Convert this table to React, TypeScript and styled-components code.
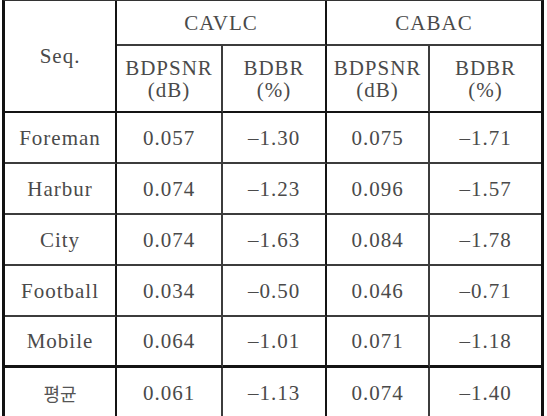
import React from "react";
import styled, { createGlobalStyle } from "styled-components";

const Global = createGlobalStyle`
  html, body { margin: 0; padding: 0; background: #ffffff; }
  body { font-family: "Liberation Serif", "DejaVu Serif", serif; }
`;

const Page = styled.div`
  padding: 0 0 0 2px;
`;

const Table = styled.table`
  border-collapse: separate;
  border-spacing: 0;
  table-layout: fixed;
  width: 542px;
  border-left: 3px solid #111;
  border-right: 3px solid #111;
  border-top: 1px solid #333;
  font-family: "Liberation Serif", "Noto Sans CJK KR", serif;
  font-size: 21px;
  letter-spacing: 1px;
  color: #4a4a4a;
`;

type CellProps = {
  $right?: "thin" | "thick" | "none";
  $bottom?: "thin" | "thick" | "heavy" | "none";
  $h?: number;
};

const borderFor = (k?: string) => {
  switch (k) {
    case "none":
      return "none";
    case "thick":
      return "2px solid #141414";
    case "heavy":
      return "3px solid #141414";
    default:
      return "2px solid #3c3c3c";
  }
};

const Cell = styled.td<CellProps>`
  box-sizing: border-box;
  padding: 0;
  text-align: center;
  vertical-align: middle;
  line-height: 22px;
  font-weight: normal;
  white-space: nowrap;
  height: ${(p) => (p.$h ? `${p.$h}px` : "auto")};
  border-right: ${(p) => borderFor(p.$right)};
  border-bottom: ${(p) => borderFor(p.$bottom)};
`;

const Head = styled(Cell).attrs({ as: "th" })``;

const Korean = styled.span`
  font-family: "Noto Sans CJK KR", sans-serif;
  font-size: 18px;
  letter-spacing: 0;
  color: #555;
`;

type Row = { name: React.ReactNode; v: string[] };

const rows: Row[] = [
  { name: "Foreman", v: ["0.057", "–1.30", "0.075", "–1.71"] },
  { name: "Harbur", v: ["0.074", "–1.23", "0.096", "–1.57"] },
  { name: "City", v: ["0.074", "–1.63", "0.084", "–1.78"] },
  { name: "Football", v: ["0.034", "–0.50", "0.046", "–0.71"] },
  { name: "Mobile", v: ["0.064", "–1.01", "0.071", "–1.18"] },
];

const avg: Row = { name: <Korean>평균</Korean>, v: ["0.061", "–1.13", "0.074", "–1.40"] };

const rights: Array<"thin" | "thick" | "none"> = ["thin", "thick", "thin", "none"];

export default function App() {
  return (
    <>
      <Global />
      <Page>
        <Table>
          <colgroup>
            <col style={{ width: 112 }} />
            <col style={{ width: 106 }} />
            <col style={{ width: 104 }} />
            <col style={{ width: 103 }} />
            <col style={{ width: 111 }} />
          </colgroup>
          <thead>
            <tr>
              <Head rowSpan={2} $right="thick" $bottom="thick">
                Seq.
              </Head>
              <Head colSpan={2} $right="thick" $bottom="thin" $h={45}>
                CAVLC
              </Head>
              <Head colSpan={2} $right="none" $bottom="thin" $h={45}>
                CABAC
              </Head>
            </tr>
            <tr>
              <Head $right="thin" $bottom="thick" $h={67}>
                BDPSNR
                <br />
                (dB)
              </Head>
              <Head $right="thick" $bottom="thick" $h={67}>
                BDBR
                <br />
                (%)
              </Head>
              <Head $right="thin" $bottom="thick" $h={67}>
                BDPSNR
                <br />
                (dB)
              </Head>
              <Head $right="none" $bottom="thick" $h={67}>
                BDBR
                <br />
                (%)
              </Head>
            </tr>
          </thead>
          <tbody>
            {rows.map((r, i) => {
              const last = i === rows.length - 1;
              return (
                <tr key={i}>
                  <Cell $right="thick" $bottom={last ? "heavy" : "thin"} $h={51}>
                    {r.name}
                  </Cell>
                  {r.v.map((x, j) => (
                    <Cell key={j} $right={rights[j]} $bottom={last ? "heavy" : "thin"}>
                      {x}
                    </Cell>
                  ))}
                </tr>
              );
            })}
            <tr>
              <Cell $right="thick" $bottom="thin" $h={52}>
                {avg.name}
              </Cell>
              {avg.v.map((x, j) => (
                <Cell key={j} $right={rights[j]} $bottom="thin">
                  {x}
                </Cell>
              ))}
            </tr>
          </tbody>
        </Table>
      </Page>
    </>
  );
}
